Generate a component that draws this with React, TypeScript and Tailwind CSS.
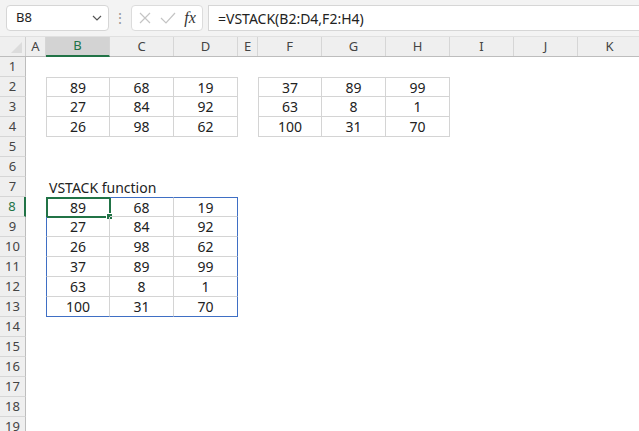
import React from "react";

const COLS = [
  { id: "A", w: "w-[20px]" },
  { id: "B", w: "w-[64px]" },
  { id: "C", w: "w-[64px]" },
  { id: "D", w: "w-[64px]" },
  { id: "E", w: "w-[20px]" },
  { id: "F", w: "w-[64px]" },
  { id: "G", w: "w-[64px]" },
  { id: "H", w: "w-[64px]" },
  { id: "I", w: "w-[64px]" },
  { id: "J", w: "w-[64px]" },
  { id: "K", w: "w-[64px]" },
];

// cell values keyed "B2"
const cells: Record<string, string> = {};
const put = (col: string[], row0: number, rows: number[][]) => {
  rows.forEach((r, i) => r.forEach((v, j) => (cells[col[j] + (row0 + i)] = String(v))));
};
put(["B", "C", "D"], 2, [[89, 68, 19], [27, 84, 92], [26, 98, 62]]);
put(["F", "G", "H"], 2, [[37, 89, 99], [63, 8, 1], [100, 31, 70]]);
put(["B", "C", "D"], 8, [
  [89, 68, 19],
  [27, 84, 92],
  [26, 98, 62],
  [37, 89, 99],
  [63, 8, 1],
  [100, 31, 70],
]);

const inRange = (c: string, r: number, c1: string, c2: string, r1: number, r2: number) =>
  c >= c1 && c <= c2 && r >= r1 && r <= r2;

function cellBorder(c: string, r: number) {
  const cls: string[] = [];
  if (inRange(c, r, "B", "D", 2, 4) || inRange(c, r, "F", "H", 2, 4)) {
    cls.push("border-r border-b border-[#d4d4d4]");
    if (c === "B" || c === "F") cls.push("border-l");
    if (r === 2) cls.push("border-t");
  }
  if (inRange(c, r, "B", "D", 8, 13)) {
    cls.push(c === "D" ? "border-r border-r-[#3f6fc4]" : "border-r border-r-[#d4d4d4]");
    cls.push(r === 13 ? "border-b border-b-[#3f6fc4]" : "border-b border-b-[#d4d4d4]");
    if (c === "B") cls.push("border-l border-l-[#3f6fc4]");
    if (r === 8) cls.push("border-t border-t-[#3f6fc4]");
  }
  return cls.join(" ");
}

export default function App() {
  const rows = Array.from({ length: 19 }, (_, i) => i + 1);
  return (
    <div className="w-[639px] h-[431px] overflow-hidden bg-white text-[#222] [font-family:'Noto_Sans',sans-serif]">
      {/* formula bar */}
      <div className="h-[37px] bg-[#f3f3f3] flex items-center pl-[6px] border-b border-[#e0e0e0]">
        <div className="w-[103px] h-[26px] bg-white border border-[#d6d6d6] rounded-[4px] flex items-center justify-between pl-[9px] pr-[5px] text-[13px]">
          <span>B8</span>
          <svg width="12" height="12" viewBox="0 0 12 12" fill="none" stroke="#555" strokeWidth="1.2">
            <path d="M2 4l4 4 4-4" />
          </svg>
        </div>
        <div className="w-[22px] flex justify-center text-[#999] text-[14px] leading-none">⋮</div>
        <div className="w-[72px] h-[26px] bg-white border border-[#dcdcdc] rounded-[4px] flex items-center justify-around px-[2px]">
          <svg width="14" height="14" viewBox="0 0 14 14" stroke="#c4c4c4" strokeWidth="1.2">
            <path d="M2 2l10 10M12 2L2 12" />
          </svg>
          <svg width="16" height="14" viewBox="0 0 16 14" fill="none" stroke="#c4c4c4" strokeWidth="1.2">
            <path d="M1 7l5 5 9-10" />
          </svg>
          <span className="italic text-[16px] text-[#333] [font-family:'Liberation_Serif',serif]">fx</span>
        </div>
        <div className="ml-[5px] flex-1 h-[26px] bg-white border border-[#d6d6d6] border-r-0 flex items-center pl-[9px] text-[14px]">
          =VSTACK(B2:D4,F2:H4)
        </div>
      </div>

      {/* column headers */}
      <div className="flex h-[20px] bg-[#efefef] border-b border-[#bdbdbd] text-[13px] text-[#444]">
        <div className="w-[26px] shrink-0 border-r border-[#d0d0d0] flex items-end justify-end p-[3px]">
          <div className="w-0 h-0 border-l-[11px] border-l-transparent border-b-[11px] border-b-[#dcdcdc]" />
        </div>
        {COLS.map((c) => (
          <div
            key={c.id}
            className={`${c.w} shrink-0 flex items-center justify-center border-r border-[#d6d6d6] ${
              c.id === "B" ? "bg-[#d3d3d3] border-b-2 border-b-[#217346] text-[#217346] -mb-px" : ""
            }`}
          >
            {c.id}
          </div>
        ))}
      </div>

      {/* rows */}
      {rows.map((r) => (
        <div key={r} className="flex h-[20px]">
          <div
            className={`w-[26px] shrink-0 bg-[#efefef] border-b border-[#d6d6d6] flex items-center justify-center text-[13px] ${
              r === 8 ? "bg-[#d3d3d3] border-r-2 border-r-[#217346] text-[#217346]" : "border-r border-r-[#bdbdbd] text-[#444]"
            }`}
          >
            {r}
          </div>
          {COLS.map((c) => {
            const v = cells[c.id + r];
            const sel = c.id === "B" && r === 8;
            return (
              <div
                key={c.id}
                className={`${c.w} shrink-0 relative flex items-center text-[14px] ${cellBorder(c.id, r)} ${
                  r === 7 && c.id === "B" ? "justify-start pl-[3px] whitespace-nowrap z-10" : "justify-center"
                }`}
              >
                {r === 7 && c.id === "B" ? "VSTACK function" : v}
                {sel && (
                  <>
                    <div className="absolute -left-px -top-px w-[65px] h-[21px] border-2 border-[#217346]" />
                    <div className="absolute -right-[4px] -bottom-[4px] w-[7px] h-[7px] bg-[#217346] border border-white" />
                  </>
                )}
              </div>
            );
          })}
        </div>
      ))}
    </div>
  );
}
